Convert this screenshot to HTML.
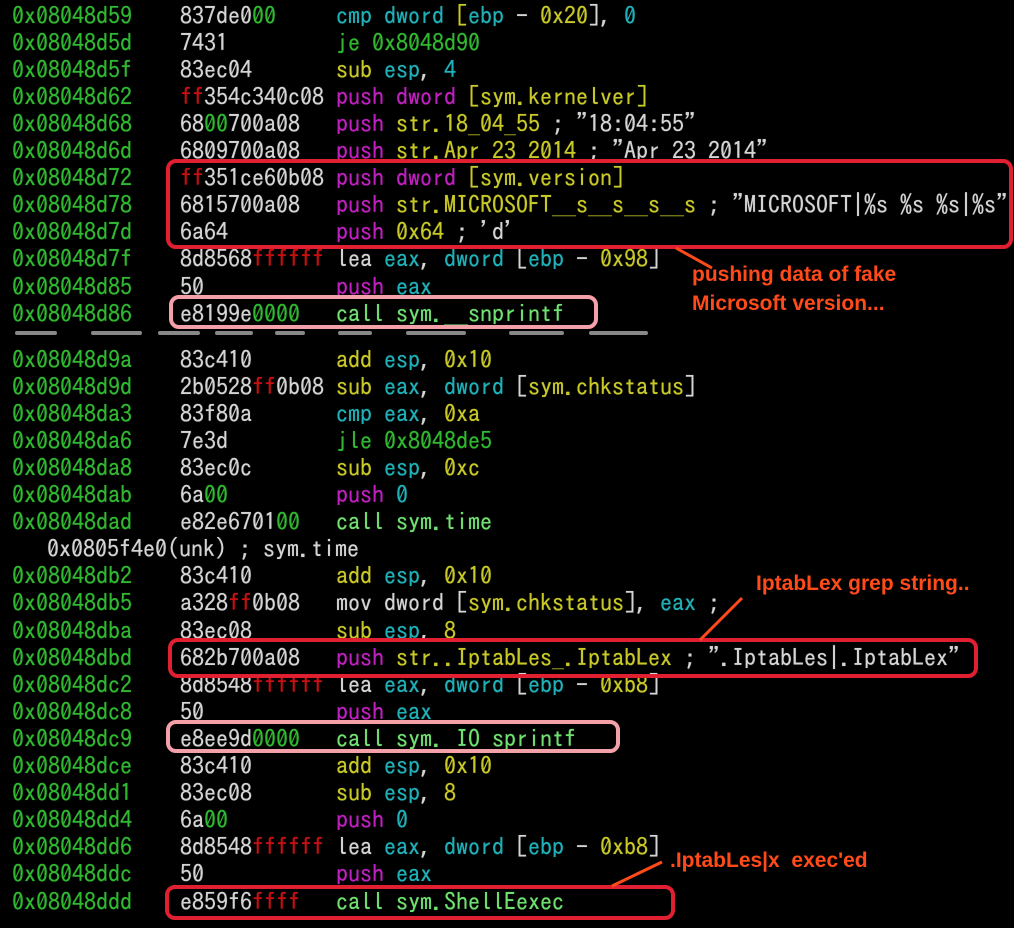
<!DOCTYPE html>
<html><head><meta charset="utf-8"><style>
html,body{margin:0;padding:0;background:#000;width:1014px;height:928px;overflow:hidden}
body{position:relative;font-family:"IPAGothic","Liberation Mono","Noto Sans CJK JP",monospace;font-size:24px;color:#d4d4d4}
.l{position:absolute;left:0;height:27px;line-height:27px;white-space:pre;text-shadow:0 0 0.6px currentColor}
.a{position:absolute;left:12px;color:#30b830}
.b{position:absolute;left:180px;color:#d4d4d4}
.c{position:absolute;left:336px;color:#d4d4d4}
.g{color:#30b830}.r{color:#c81010}.m{color:#c020c0}.y{color:#c8c828}.k{color:#20b0b8}.G{color:#70e070}.w{color:#d4d4d4}
.box{position:absolute;border:4px solid #e02030;border-radius:10px;box-sizing:border-box}
.pk{border-color:#f4a0a8}
.ann{position:absolute;font-family:"Liberation Sans",Arial,sans-serif;font-weight:bold;font-size:21px;color:#ff4a1a;line-height:29px;white-space:pre}
.d{position:absolute;height:4px;background:#888;top:331px;border-radius:2px}
</style></head><body>
<div class="l" style="top:1.5px"><span class="a">0x08048d59</span><span class="b">837de0<span class="g">00</span></span><span class="c"><span class="k">cmp dword</span> <span class="y">[</span><span class="k">ebp</span> - <span class="y">0x20</span>], <span class="k">0</span></span></div>
<div class="l" style="top:28.6px"><span class="a">0x08048d5d</span><span class="b">7431</span><span class="c"><span class="g">je 0x8048d90</span></span></div>
<div class="l" style="top:55.7px"><span class="a">0x08048d5f</span><span class="b">83ec04</span><span class="c"><span class="y">sub</span> <span class="k">esp</span>, <span class="k">4</span></span></div>
<div class="l" style="top:82.8px"><span class="a">0x08048d62</span><span class="b"><span class="r">ff</span>354c340c08</span><span class="c"><span class="m">push dword</span> <span class="y">[sym.kernelver]</span></span></div>
<div class="l" style="top:109.9px"><span class="a">0x08048d68</span><span class="b">68<span class="g">00</span>700a08</span><span class="c"><span class="m">push</span> <span class="y">str.18_04_55</span> ; "18:04:55"</span></div>
<div class="l" style="top:137px"><span class="a">0x08048d6d</span><span class="b">6809700a08</span><span class="c"><span class="m">push</span> <span class="y">str.Apr_23_2014</span> ; "Apr 23 2014"</span></div>
<div class="l" style="top:164.1px"><span class="a">0x08048d72</span><span class="b"><span class="r">ff</span>351ce60b08</span><span class="c"><span class="m">push dword</span> <span class="y">[sym.version]</span></span></div>
<div class="l" style="top:191.2px"><span class="a">0x08048d78</span><span class="b">6815700a08</span><span class="c"><span class="m">push</span> <span class="y">str.MICROSOFT__s__s__s__s</span> ; "MICROSOFT|%s %s %s|%s"</span></div>
<div class="l" style="top:218.3px"><span class="a">0x08048d7d</span><span class="b">6a64</span><span class="c"><span class="m">push</span> <span class="y">0x64</span> ; 'd'</span></div>
<div class="l" style="top:245.4px"><span class="a">0x08048d7f</span><span class="b">8d8568<span class="r">ffffff</span></span><span class="c">lea <span class="k">eax</span>, <span class="k">dword</span> [<span class="k">ebp</span> - <span class="y">0x98</span>]</span></div>
<div class="l" style="top:272.5px"><span class="a">0x08048d85</span><span class="b">50</span><span class="c"><span class="m">push</span> <span class="k">eax</span></span></div>
<div class="l" style="top:299.6px"><span class="a">0x08048d86</span><span class="b">e8199e<span class="g">0000</span></span><span class="c"><span class="G">call sym.__snprintf</span></span></div>
<div class="l" style="top:345.5px"><span class="a">0x08048d9a</span><span class="b">83c410</span><span class="c"><span class="y">add</span> <span class="k">esp</span>, <span class="y">0x10</span></span></div>
<div class="l" style="top:372.6px"><span class="a">0x08048d9d</span><span class="b">2b0528<span class="r">ff</span>0b08</span><span class="c"><span class="y">sub</span> <span class="k">eax</span>, <span class="k">dword</span> [<span class="y">sym.chkstatus</span>]</span></div>
<div class="l" style="top:399.7px"><span class="a">0x08048da3</span><span class="b">83f80a</span><span class="c"><span class="k">cmp</span> <span class="k">eax</span>, <span class="y">0xa</span></span></div>
<div class="l" style="top:426.8px"><span class="a">0x08048da6</span><span class="b">7e3d</span><span class="c"><span class="g">jle 0x8048de5</span></span></div>
<div class="l" style="top:453.9px"><span class="a">0x08048da8</span><span class="b">83ec0c</span><span class="c"><span class="y">sub</span> <span class="k">esp</span>, <span class="y">0xc</span></span></div>
<div class="l" style="top:481px"><span class="a">0x08048dab</span><span class="b">6a<span class="g">00</span></span><span class="c"><span class="m">push</span> <span class="k">0</span></span></div>
<div class="l" style="top:508.1px"><span class="a">0x08048dad</span><span class="b">e82e6701<span class="g">00</span></span><span class="c"><span class="G">call sym.time</span></span></div>
<div class="l" style="top:535.2px"><span class="a w" style="left:47px;color:#d4d4d4">0x0805f4e0(unk) ; sym.time</span></div>
<div class="l" style="top:562.3px"><span class="a">0x08048db2</span><span class="b">83c410</span><span class="c"><span class="y">add</span> <span class="k">esp</span>, <span class="y">0x10</span></span></div>
<div class="l" style="top:589.4px"><span class="a">0x08048db5</span><span class="b">a328<span class="r">ff</span>0b08</span><span class="c">mov dword [<span class="y">sym.chkstatus</span>], <span class="k">eax</span> ;</span></div>
<div class="l" style="top:616.5px"><span class="a">0x08048dba</span><span class="b">83ec08</span><span class="c"><span class="y">sub</span> <span class="k">esp</span>, <span class="y">8</span></span></div>
<div class="l" style="top:643.6px"><span class="a">0x08048dbd</span><span class="b">682b700a08</span><span class="c"><span class="m">push</span> <span class="y">str..IptabLes_.IptabLex</span> ; ".IptabLes|.IptabLex"</span></div>
<div class="l" style="top:670.7px"><span class="a">0x08048dc2</span><span class="b">8d8548<span class="r">ffffff</span></span><span class="c">lea <span class="k">eax</span>, <span class="k">dword</span> [<span class="k">ebp</span> - <span class="y">0xb8</span>]</span></div>
<div class="l" style="top:697.8px"><span class="a">0x08048dc8</span><span class="b">50</span><span class="c"><span class="m">push</span> <span class="k">eax</span></span></div>
<div class="l" style="top:724.9px"><span class="a">0x08048dc9</span><span class="b">e8ee9d<span class="g">0000</span></span><span class="c"><span class="G">call sym._IO_sprintf</span></span></div>
<div class="l" style="top:752px"><span class="a">0x08048dce</span><span class="b">83c410</span><span class="c"><span class="y">add</span> <span class="k">esp</span>, <span class="y">0x10</span></span></div>
<div class="l" style="top:779.1px"><span class="a">0x08048dd1</span><span class="b">83ec08</span><span class="c"><span class="y">sub</span> <span class="k">esp</span>, <span class="y">8</span></span></div>
<div class="l" style="top:806.2px"><span class="a">0x08048dd4</span><span class="b">6a<span class="g">00</span></span><span class="c"><span class="m">push</span> <span class="k">0</span></span></div>
<div class="l" style="top:833.3px"><span class="a">0x08048dd6</span><span class="b">8d8548<span class="r">ffffff</span></span><span class="c">lea <span class="k">eax</span>, <span class="k">dword</span> [<span class="k">ebp</span> - <span class="y">0xb8</span>]</span></div>
<div class="l" style="top:860.4px"><span class="a">0x08048ddc</span><span class="b">50</span><span class="c"><span class="m">push</span> <span class="k">eax</span></span></div>
<div class="l" style="top:887.5px"><span class="a">0x08048ddd</span><span class="b">e859f6<span class="r">ffff</span></span><span class="c"><span class="G">call sym.ShellEexec</span></span></div>

<div class="d" style="left:15px;width:42px"></div>
<div class="d" style="left:91px;width:51px"></div>
<div class="d" style="left:158px;width:42px"></div>
<div class="d" style="left:215px;width:38px"></div>
<div class="d" style="left:275px;width:30px"></div>
<div class="d" style="left:338px;width:34px"></div>
<div class="d" style="left:406px;width:60px"></div>
<div class="d" style="left:509px;width:55px"></div>
<div class="d" style="left:589px;width:59px"></div>

<div class="box" style="left:166px;top:159px;width:847px;height:90px"></div>
<div class="box pk" style="left:169px;top:295px;width:429px;height:34px"></div>
<div class="box" style="left:168px;top:638px;width:810px;height:40px"></div>
<div class="box pk" style="left:166px;top:720px;width:454px;height:33px"></div>
<div class="box" style="left:165px;top:885px;width:510px;height:35px"></div>

<svg style="position:absolute;left:0;top:0" width="1014" height="928">
<line x1="676" y1="248" x2="712" y2="268" stroke="#ff4a1a" stroke-width="3"/>
<line x1="700" y1="640" x2="742" y2="598" stroke="#ff4a1a" stroke-width="3"/>
<line x1="612" y1="886" x2="662" y2="862" stroke="#ff4a1a" stroke-width="3"/>
</svg>
<div class="ann" style="left:692px;top:260px">pushing data of fake
Microsoft version...</div>
<div class="ann" style="left:756px;top:569px">IptabLex grep string..</div>
<div class="ann" style="left:670px;top:846px">.IptabLes|x  exec'ed</div>
</body></html>
